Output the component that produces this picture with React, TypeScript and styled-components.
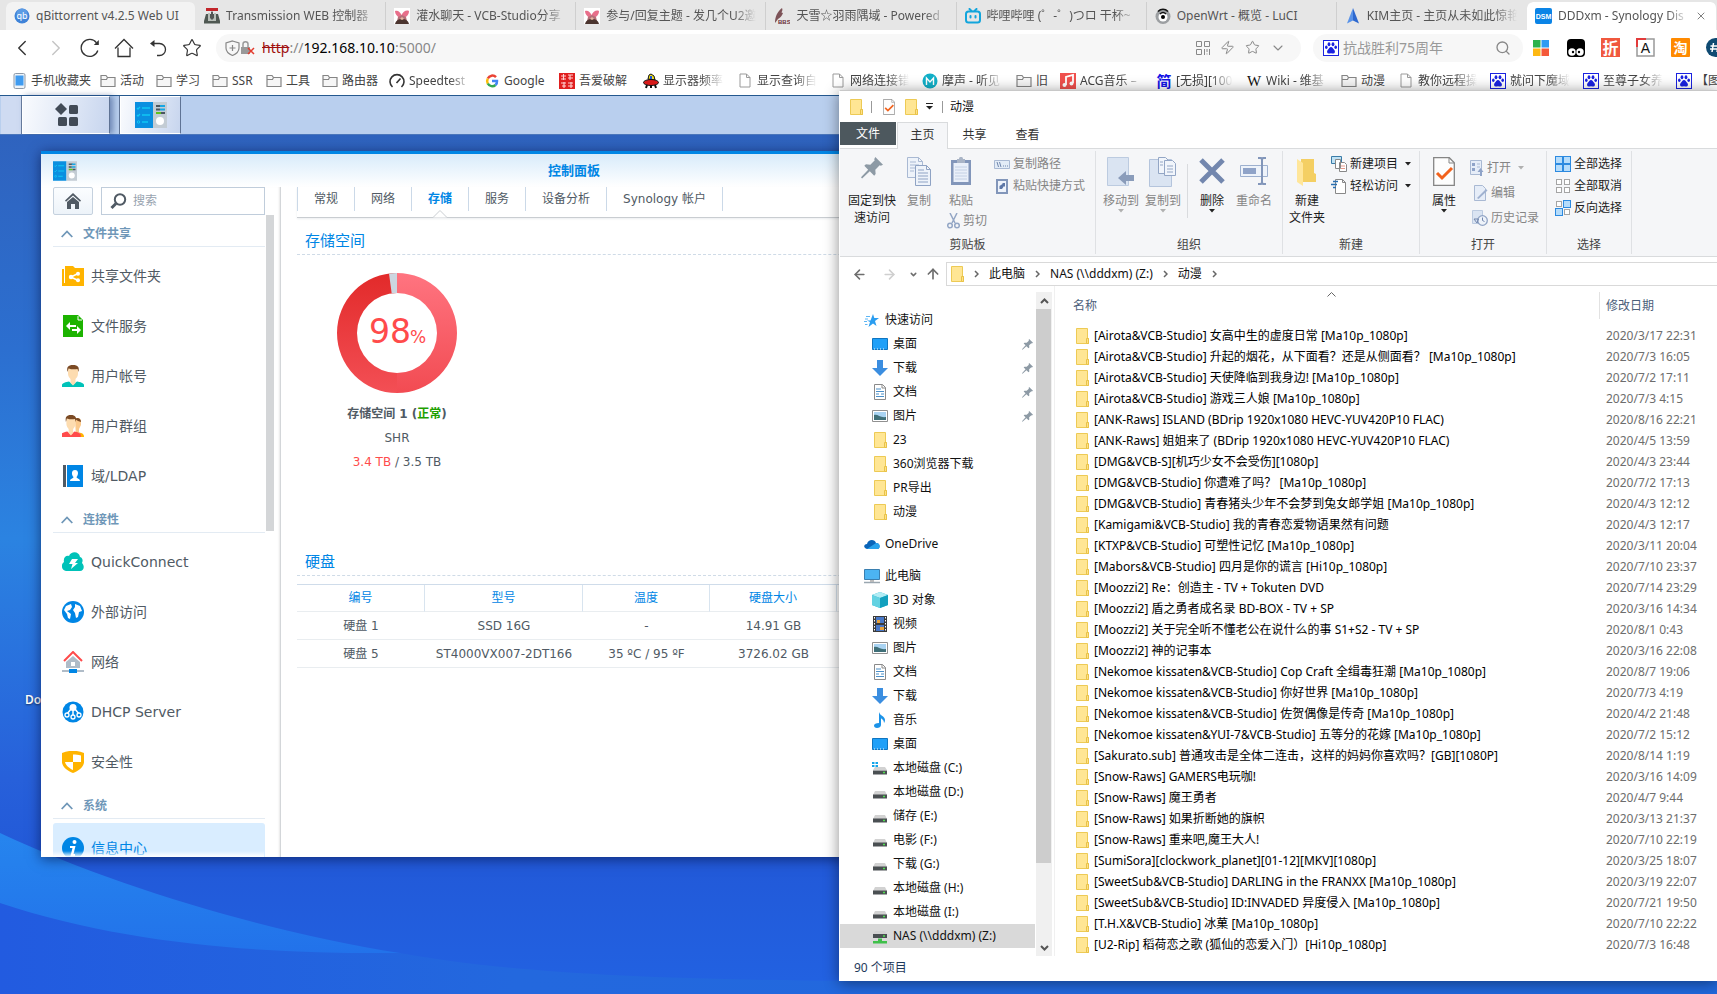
import React from 'react';
import styled, { createGlobalStyle, css } from 'styled-components';
import { Star, Search, ChevronLeft, ChevronRight, ChevronDown, Zap, X, ArrowLeft, ArrowRight, ArrowUp } from 'lucide-react';

const uiFont = `'Noto Sans', 'Noto Sans CJK SC', sans-serif`;
const dsmFont = `'DejaVu Sans', 'Noto Sans CJK SC', sans-serif`;

const GlobalStyle = createGlobalStyle`
  * { box-sizing: border-box; }
  body { margin: 0; background: #2260e0; }
  button, input, a { font: inherit; color: inherit; }
  button { border: 0; padding: 0; background: none; cursor: pointer; }
  a { text-decoration: none; }
  svg { display: block; flex: none; }
  ul { margin: 0; padding: 0; list-style: none; }
`;

const Screen = styled.div`
  position: relative;
  min-height: 100vh;
  display: flex;
  flex-direction: column;
  overflow: hidden;
  font: 12px/18px ${uiFont};
  color: #444;
`;

/* ---------- browser chrome ---------- */

const TabStrip = styled.nav`
  display: flex;
  align-items: flex-end;
  height: 30px;
  padding-left: 6px;
  background: #e6e6e6;
`;

const BrowserTab = styled.button<{ $look?: 'hover' | 'active'; $line?: boolean }>`
  flex: 1;
  min-width: 0;
  height: 28px;
  display: flex;
  align-items: center;
  gap: 6px;
  padding: 0 9px 0 8px;
  text-align: left;
  color: #555;
  border-right: 1px solid ${p => (p.$line ? '#cfcfcf' : 'transparent')};
  background-clip: padding-box;
  ${p => p.$look && css`
    border-radius: 6px 6px 0 0;
    background-color: ${p.$look === 'active' ? '#fff' : '#f3f3f3'};
  `}
`;

const fade = css`
  mask-image: linear-gradient(to right, #000 calc(100% - 22px), transparent);
`;

const TabTitle = styled.span<{ $fade?: boolean }>`
  flex: 1;
  overflow: hidden;
  white-space: nowrap;
  ${p => p.$fade && fade}
`;

const Toolbar = styled.div`
  display: flex;
  align-items: center;
  height: 36px;
  padding-bottom: 1px;
  background: #fff;
`;

const ToolButtons = styled.div`
  display: flex;
  width: 216px;
  padding-left: 5px;
`;

const ToolButton = styled.button<{ $off?: boolean }>`
  width: 34px;
  height: 28px;
  display: grid;
  place-items: center;
  color: ${p => (p.$off ? '#c4c4c4' : '#333')};
`;

const Pill = styled.div`
  height: 28px;
  display: flex;
  align-items: center;
  border-radius: 14px;
  background: #f7f7f7;
`;

const AddressPill = styled(Pill)`
  flex: 1;
  padding: 0 11px 0 9px;
`;

const Url = styled.div`
  flex: 1;
  padding-left: 7px;
  font-size: 14px;
  color: #888;
  s { color: #a01010; }
  b { font-weight: 400; color: #000; }
`;

const PillIcon = styled.button`
  width: 25px;
  display: grid;
  place-items: center;
  color: #888;
`;

const SearchPill = styled(Pill)`
  width: 210px;
  margin-left: 12px;
  padding: 0 8px 0 10px;
  gap: 4px;
  input {
    flex: 1;
    min-width: 0;
    border: 0;
    padding: 0;
    outline: 0;
    background: none;
    font-size: 14px;
  }
  input::placeholder { color: #999; }
`;

const Extensions = styled.div`
  display: flex;
  width: 194px;
  overflow: hidden;
`;

const Extension = styled.button`
  flex: none;
  width: 35px;
  display: grid;
  place-items: center;
`;

const Bookmarks = styled.nav`
  display: flex;
  height: 29px;
  padding-left: 11px;
  overflow: hidden;
  background: #fff;
`;

const Bookmark = styled.a<{ $w: number }>`
  flex: none;
  width: ${p => p.$w}px;
  display: flex;
  align-items: center;
  gap: 4px;
  span {
    flex: 1;
    overflow: hidden;
    white-space: nowrap;
  }
`;

const BookmarkText = styled.span<{ $fade?: boolean }>`
  margin-right: ${p => (p.$fade ? 13 : 0)}px;
  ${p => p.$fade && fade}
`;

/* ---------- DSM desktop ---------- */

const DsmBar = styled.div`
  display: flex;
  height: 40px;
  border-top: 1px solid #24588f;
  border-bottom: 1px solid #4a76bb;
  background: #b9cfee;
`;

const DsmBarEdge = styled.div`
  width: 21px;
  margin-left: 1px;
  background: #cfdbf2;
  border-right: 1px solid #6c7f9f;
`;

const DsmBarButton = styled.button<{ $w: number; $raised?: boolean }>`
  width: ${p => p.$w}px;
  display: grid;
  place-items: center;
  border: 1px solid #fff;
  border-right-color: #5f7394;
  background: linear-gradient(100deg, #f7f9fd 5%, #dce5f5 60%, #c7d5ee);
  box-shadow: ${p => (p.$raised ? '3px 0 6px rgba(30, 60, 120, 0.5)' : '-1px 0 #5f7394')};
  margin-right: 10px;
`;

const Desktop = styled.main`
  position: relative;
  flex: 1;
  overflow: hidden;
  font-family: ${dsmFont};
  background: linear-gradient(#2f63be, #2c6fd0 25%, #2b83e1 47%, #2760da 75%, #2259d8 84%, #2262e2);
`;

const Wallpaper = styled.svg`
  position: absolute;
  left: 0;
  bottom: 0;
  width: 100%;
  height: 200px;
`;

const DesktopLabel = styled.span`
  position: absolute;
  left: 25px;
  bottom: 285px;
  color: #fff;
  font: 12px/18px 'Noto Sans', sans-serif;
  font-weight: 600;
  text-shadow: 0 1px 2px rgba(0, 0, 0, 0.5);
`;

const DsmWindow = styled.section`
  position: absolute;
  left: 41px;
  top: 16px;
  bottom: 137px;
  width: 1066px;
  display: flex;
  flex-direction: column;
  background: #fff;
  border-top: 3px solid #0086e5;
  box-shadow: 0 2px 12px rgba(0, 10, 50, 0.6);
  color: #505a64;
`;

const DsmTitle = styled.header`
  flex: none;
  display: flex;
  align-items: center;
  height: 33px;
  padding: 0 36px 0 12px;
  background: linear-gradient(#d8ebfa, #fff);
  h1 {
    flex: 1;
    margin: 0;
    text-align: center;
    font-size: 13px;
    line-height: 18px;
    color: #0086e5;
  }
`;

const DsmBody = styled.div`
  flex: 1;
  min-height: 0;
  display: flex;
`;

const Sidebar = styled.aside`
  width: 240px;
  display: flex;
  flex-direction: column;
  padding-left: 12px;
  border-right: 1px solid #d3d6d9;
  box-shadow: inset -2px 0 2px -1px #e8e8e8;
`;

const SidebarTop = styled.div`
  display: flex;
  gap: 8px;
  width: 212px;
`;

const HomeButton = styled.button`
  flex: none;
  width: 40px;
  height: 28px;
  display: grid;
  place-items: center;
  border: 1px solid #c5d1de;
  border-radius: 2px;
  background: linear-gradient(#fbfdff, #edf3f9);
`;

const SearchBox = styled.label`
  flex: 1;
  min-width: 0;
  height: 28px;
  display: flex;
  align-items: center;
  gap: 6px;
  padding-left: 8px;
  border: 1px solid #c0cddb;
  input {
    flex: 1;
    min-width: 0;
    border: 0;
    padding: 0;
    outline: 0;
  }
  input::placeholder { color: #98a3af; opacity: 1; }
`;

const SidebarScroll = styled.div`
  position: relative;
  flex: 1;
  min-height: 0;
  display: flex;
  gap: 1px;
  overflow: hidden;
  &::after {
    content: '';
    position: absolute;
    left: 0;
    right: 16px;
    bottom: 0;
    height: 6px;
    background: linear-gradient(transparent, #fff);
  }
`;

const SidebarList = styled.div`
  width: 212px;
`;

const DsmThumb = styled.div`
  width: 8px;
  height: 316px;
  background: #d4d6d8;
`;

const SideHead = styled.button`
  width: 100%;
  height: 32px;
  display: flex;
  align-items: center;
  gap: 10px;
  padding: 6px 0 0 8px;
  border-bottom: 1px solid #e3ebf3;
  margin-bottom: 4px;
  font-weight: 700;
  color: #6f97b8;
`;

const SideItem = styled.a<{ $on?: boolean }>`
  height: 50px;
  display: flex;
  align-items: center;
  gap: 7px;
  padding-left: 9px;
  font-size: 14px;
  border-radius: 3px;
  ${p => p.$on && css`background: #d9edff; color: #0086e5;`}
`;

const Content = styled.div`
  flex: 1;
  min-width: 0;
  padding-left: 16px;
`;

const DsmTabs = styled.div`
  display: flex;
  height: 31px;
  border-bottom: 1px solid #c9cdd1;
  box-shadow: 0 1px 2px #eceef0;
`;

const DsmTab = styled.button<{ $on?: boolean }>`
  position: relative;
  height: 24px;
  padding: 0 16px;
  border-left: 1px solid #cbd9e8;
  &:last-child { border-right: 1px solid #cbd9e8; }
  ${p => p.$on && css`color: #0086e5; font-weight: 700;`}
  svg {
    position: absolute;
    left: 50%;
    margin-left: -7px;
    bottom: -7px;
  }
`;

const SectionTitle = styled.h2`
  margin: 0;
  padding: 12px 8px 2px;
  border-bottom: 1px dashed #cfdbe7;
  font-size: 15px;
  font-weight: 400;
  line-height: 22px;
  color: #0086e5;
`;

const Volume = styled.div`
  width: 200px;
  padding: 18px 0 65px;
  display: flex;
  flex-direction: column;
  align-items: center;
  line-height: 24px;
  svg { margin-bottom: 9px; }
  em { font-style: normal; color: #ff4b4b; }
  i { font-style: normal; color: #1ea000; }
`;

const DiskTable = styled.table`
  width: 100%;
  margin-top: 8px;
  table-layout: fixed;
  border-spacing: 0;
  border-top: 1px solid #cfdcea;
  th, td {
    height: 28px;
    padding: 0;
    text-align: center;
    font-weight: 400;
    border-bottom: 1px solid #e9edf0;
  }
  th {
    height: 27px;
    color: #0086e5;
    border-right: 1px solid #d8e4ef;
  }
`;

/* ---------- file explorer ---------- */

const Explorer = styled.section`
  position: absolute;
  left: 839px;
  right: 0;
  top: 90px;
  display: flex;
  flex-direction: column;
  border-top: 1px solid #c8c8c8;
  border-left: 1px solid #fff;
  background: #fff;
  box-shadow: 0 2px 14px rgba(0, 0, 0, 0.45);
  color: #111;
`;

const ExTitle = styled.header`
  height: 31px;
  display: flex;
  align-items: center;
  padding-left: 9px;
`;

const QuickTool = styled.button<{ $w: number }>`
  width: ${p => p.$w}px;
  display: grid;
  place-items: center;
`;

const Bar = styled.i`
  width: 1px;
  height: 12px;
  margin: 0 7px;
  background: #999;
`;

const ExTabs = styled.div`
  display: flex;
  height: 27px;
  border-bottom: 1px solid #d9dbdd;
`;

const ExTab = styled.button<{ $kind?: 'file' | 'on' }>`
  width: 53px;
  height: 24px;
  padding-top: 1px;
  color: #333;
  ${p => p.$kind === 'file' && css`
    width: 56px;
    height: 23px;
    margin-right: 1px;
    background: #4d585e;
    color: #fff;
  `}
  ${p => p.$kind === 'on' && css`
    width: 51px;
    height: 27px;
    padding-bottom: 3px;
    border: 1px solid #d9dbdd;
    border-bottom: 0;
    background: #f5f6f8;
  `}
`;

const Ribbon = styled.div`
  display: flex;
  height: 108px;
  padding: 2px 0;
  background: #f5f6f8;
  border-bottom: 1px solid #d9dbdd;
`;

const Group = styled.fieldset<{ $w: number }>`
  width: ${p => p.$w}px;
  min-width: 0;
  margin: 0;
  padding: 0;
  border: 0;
  border-right: 1px solid #dfe1e4;
  display: flex;
  flex-direction: column;
`;

const GroupBody = styled.div<{ $pad?: number }>`
  flex: 1;
  display: flex;
  align-items: flex-start;
  padding-left: ${p => p.$pad || 0}px;
`;

const GroupLabel = styled.span`
  height: 18px;
  text-align: center;
  color: #444;
`;

const BigButton = styled.button<{ $w: number; $off?: boolean }>`
  width: ${p => p.$w}px;
  flex: none;
  display: flex;
  flex-direction: column;
  align-items: center;
  padding-top: 6px;
  line-height: 17px;
  white-space: nowrap;
  color: ${p => (p.$off ? '#858585' : '#1c1c1c')};
  > span:first-child {
    height: 35px;
    display: flex;
    align-items: flex-start;
  }
`;

const Stack = styled.div<{ $pitch: number; $pad?: number; $left?: number }>`
  display: flex;
  flex-direction: column;
  padding: ${p => p.$pad || 0}px 0 0 ${p => p.$left || 0}px;
  > button { height: ${p => p.$pitch}px; }
`;

const SmallButton = styled.button<{ $off?: boolean }>`
  display: flex;
  align-items: center;
  gap: 3px;
  white-space: nowrap;
  color: ${p => (p.$off ? '#858585' : '#1c1c1c')};
  > svg:last-child { margin-left: 4px; }
`;

const Column = styled.div<{ $w: number }>`
  width: ${p => p.$w}px;
  flex: none;
`;

const RibbonLine = styled.i`
  width: 1px;
  height: 54px;
  margin: 13px 3px 0;
  background: #d9dbde;
`;

const AddressRow = styled.div`
  display: flex;
  height: 29px;
  padding-top: 5px;
  color: #777;
`;

const NavButtons = styled.div`
  display: flex;
  align-items: center;
  width: 106px;
  padding-left: 4px;
`;

const NavButton = styled.button<{ $w: number; $off?: boolean }>`
  width: ${p => p.$w}px;
  display: grid;
  place-items: center;
  color: ${p => (p.$off ? '#cfcfcf' : '#6e6e6e')};
`;

const Crumbs = styled.div`
  flex: 1;
  height: 24px;
  display: flex;
  align-items: center;
  gap: 10px;
  padding-left: 4px;
  border: 1px solid #d9d9d9;
  border-right: 0;
  button { color: #111; }
`;

const ExMain = styled.div`
  display: flex;
`;

const Tree = styled.nav`
  width: 196px;
  margin-top: 6px;
  padding: 16px 1px 8px 0;
`;

const TreeItem = styled.a<{ $top?: boolean; $on?: boolean; $gap?: boolean }>`
  height: 24px;
  display: flex;
  align-items: center;
  gap: 5px;
  margin-top: ${p => (p.$gap ? 8 : 0)}px;
  padding: 0 2px 0 ${p => (p.$top ? 24 : 32)}px;
  background: ${p => (p.$on ? '#d9d9d9' : 'none')};
  span { flex: 1; white-space: nowrap; }
`;

const ScrollBar = styled.div`
  width: 16px;
  margin-top: 6px;
  display: flex;
  flex-direction: column;
  background: #f0f0f0;
  color: #555;
`;

const ScrollArrow = styled.button`
  height: 17px;
  display: grid;
  place-items: center;
`;

const ScrollTrack = styled.div`
  flex: 1;
  &::before {
    content: '';
    display: block;
    height: 88%;
    margin-right: 1px;
    background: #cdcdcd;
  }
`;

const Files = styled.div`
  flex: 1;
  min-width: 0;
  margin-left: 2px;
  border-left: 1px solid #f0f0f0;
`;

const FileTable = styled.table`
  width: 100%;
  table-layout: fixed;
  border-spacing: 0;
  td, th { padding: 0; white-space: nowrap; overflow: hidden; }
  td { height: 21px; color: #000; }
  td:last-child { padding-left: 7px; color: #6d6d6d; }
  th {
    position: relative;
    height: 39px;
    text-align: left;
    font-weight: 400;
    color: #4c607a;
  }
  th:first-child { padding-left: 18px; }
  th > svg {
    position: absolute;
    top: 6px;
    left: 50%;
  }
`;

const DateHead = styled.span`
  display: block;
  padding: 5px 0 4px 6px;
  border-left: 1px solid #e2e2e2;
`;

const FileName = styled.div`
  display: flex;
  align-items: center;
  gap: 5px;
  padding-left: 21px;
  line-height: 18px;
`;

const Status = styled.footer`
  height: 25px;
  padding: 3px 0 0 14px;
  color: #1e395b;
`;

/* ---------- icons ---------- */

const Folder = () => (
  <svg width="13" height="16" viewBox="0 0 13 16">
    <path d="M.5.5h11v10h1v5H.5z" fill="#ffe694" stroke="#edca55" />
    <path d="M10.500 10.500h2v5h-2z" fill="#ffe187" stroke="#e8c248" />
  </svg>
);

const Caret = ({ off }: { off?: boolean }) => (
  <svg width="6" height="4" viewBox="0 0 6 4"><path d="M0 0h6L3 3.5z" fill={off ? '#b0b0b0' : '#222'} /></svg>
);

const Crumb = () => (
  <svg width="5" height="8" viewBox="0 0 5 8"><path d="M1 1l3 3-3 3" fill="none" stroke="#666" strokeWidth="1.500" /></svg>
);

const Pin = ({ s = 11 }: { s?: number }) => (
  <svg width={s} height={s} viewBox="0 0 20 20">
    <path d="M13 0l7 7-2 1-1-.5-4 4 .3 4L12 17l-4-4-7 6.500-1-1L6.500 11.500 3 8l1.500-1.300 4 .3 4-4L12 2z" fill="#8d9aa5" />
  </svg>
);

const Paw = () => (
  <svg width="16" height="16" viewBox="0 0 16 16">
    <rect x=".5" y=".5" width="15" height="15" fill="#fff" stroke="#1a22e0" />
    <g fill="#1a22e0">
      <ellipse cx="6" cy="4.200" rx="1.400" ry="2" /><ellipse cx="10" cy="4.200" rx="1.400" ry="2" />
      <ellipse cx="3.300" cy="7.300" rx="1.300" ry="1.800" /><ellipse cx="12.700" cy="7.300" rx="1.300" ry="1.800" />
      <path d="M8 7c1.500 0 2 1.700 3.300 3 1.200 1.300.7 3.500-1 3.500-1 0-1.500-.3-2.300-.3s-1.300.3-2.300.3c-1.700 0-2.200-2.200-1-3.500C6 8.700 6.500 7 8 7z" />
    </g>
  </svg>
);

const GrayFolder = () => (
  <svg width="16" height="14" viewBox="0 0 16 14"><path d="M1 12.500v-11h5l1.500 2H15v9zM1 5.500h5.500l1-2" fill="#f6f6f6" stroke="#858585" strokeWidth="1.200" /></svg>
);

const GrayDoc = () => (
  <svg width="16" height="15" viewBox="0 0 16 15"><path d="M3 1h6.500L13 4.500V14H3zM9.500 1v3.500H13" fill="#fff" stroke="#9a9a9a" /></svg>
);

const Rabbit = () => (
  <svg width="16" height="16" viewBox="0 0 16 16">
    <rect width="16" height="16" fill="#fff" />
    <path d="M1 3c3-1 5 1 6.500 4C9 4 12 1.500 15 3c0 4-3 6-5 7H6C3 8.500 1 6 1 3z" fill="#e86f8a" />
    <path d="M4 9l4-2 4 2 1 4H3z" fill="#b5707a" /><path d="M1 16c1-4 4-5 7-5s6 1 7 5z" fill="#4b352f" /><path d="M6 11l2-2 2 2-2 1z" fill="#e8b9a2" />
  </svg>
);

const favicons: Record<string, React.ReactNode> = {
  qb: (
    <svg width="16" height="16" viewBox="0 0 16 16"><circle cx="8" cy="8" r="7.500" fill="#3f83d8" /><circle cx="8" cy="6" r="5.500" fill="#5c9be4" />
      <text x="8" y="11" fontSize="9" textAnchor="middle" fill="#fff" fontFamily="Noto Sans">qb</text></svg>
  ),
  tr: (
    <svg width="16" height="16" viewBox="0 0 16 16"><path d="M2 6h12l2 7v2.500H0V13z" fill="#4f5852" /><path d="M2 0h12v3H2z" fill="#c2252a" /><path d="M7 3h2v8H7z" fill="#aaa" />
      <path d="M4 5h2v5l2 2 2-2V5h2v8H4z" fill="#b9bfb9" /><path d="M7.300 4h1.400v7H7.300z" fill="#333" /></svg>
  ),
  rabbit: <Rabbit />,
  bbs: (
    <svg width="16" height="16" viewBox="0 0 16 16"><path d="M1 15C1 9 3 4 8 0c1 2 0 3-.5 4.500L9 5c-1 3-3 5-5 6z" fill="#7d5358" />
      <text x="4" y="16" fontSize="6" fontWeight="700" fill="#6b2f3a" fontFamily="Liberation Sans">BBS</text></svg>
  ),
  bili: (
    <svg width="16" height="16" viewBox="0 0 16 16" fill="none" stroke="#12a5dc" strokeWidth="2" strokeLinecap="round">
      <rect x="1" y="3.500" width="14" height="11" rx="2.500" /><path d="M4.500 1l2 2M11.500 1l-2 2M5.500 8v1.500M10.500 8v1.500" /></svg>
  ),
  owrt: (
    <svg width="16" height="16" viewBox="0 0 16 16"><circle cx="8" cy="8.500" r="7.500" fill="#9c9fa2" /><circle cx="8" cy="9" r="4.500" fill="#fff" />
      <circle cx="8" cy="9" r="2" /><path d="M3 3.500c3-3 7-3 10 0M5 6c2-2 4-2 6 0" fill="none" stroke="#111" strokeWidth="1.600" /></svg>
  ),
  kim: (
    <svg width="16" height="16" viewBox="0 0 16 16"><path d="M8 0L2 15.500l6-3z" fill="#5a93e8" /><path d="M8 0l6 15.500-6-3z" fill="#2d68cf" /></svg>
  ),
  dsm: (
    <svg width="17" height="16" viewBox="0 0 17 16"><rect width="17" height="16" rx="2" fill="#0b84e6" />
      <text x="8.500" y="10.500" fontSize="7" fontWeight="700" textAnchor="middle" fill="#fff" fontFamily="Liberation Sans">DSM</text></svg>
  ),
};

const browserTabs: { icon: string; title: string; look?: 'hover' | 'active'; line?: boolean; fade?: boolean }[] = [
  { icon: 'qb', title: 'qBittorrent v4.2.5 Web UI', look: 'hover' },
  { icon: 'tr', title: 'Transmission WEB 控制器', line: true, fade: true },
  { icon: 'rabbit', title: '灌水聊天 - VCB-Studio分享', line: true, fade: true },
  { icon: 'rabbit', title: '参与/回复主题 - 发几个U2邀', line: true, fade: true },
  { icon: 'bbs', title: '天雪☆羽雨隅域 - Powered', line: true, fade: true },
  { icon: 'bili', title: '哔哩哔哩 (゜-゜)つロ 干杯~', line: true, fade: true },
  { icon: 'owrt', title: 'OpenWrt - 概览 - LuCI', line: true },
  { icon: 'kim', title: 'KIM主页 - 主页从未如此惊艳', fade: true },
  { icon: 'dsm', title: 'DDDxm - Synology Dis', look: 'active', fade: true },
];

const bookmarks: [React.ReactNode, string, number, boolean?][] = [
  [<svg width="16" height="16" viewBox="0 0 16 16"><rect x="3" y=".5" width="11" height="15" rx="1.500" fill="#eef3f8" stroke="#8d99a8" /><rect x="4.500" y="2.500" width="8" height="10" fill="#3f9bf0" /></svg>, '手机收藏夹', 89],
  [<GrayFolder />, '活动', 56],
  [<GrayFolder />, '学习', 56],
  [<GrayFolder />, 'SSR', 54],
  [<GrayFolder />, '工具', 56],
  [<GrayFolder />, '路由器', 67],
  [<svg width="16" height="16" viewBox="0 0 16 16" fill="none" stroke="#333" strokeWidth="1.600"><path d="M3.500 14A7 7 0 1 1 12.500 14M7.500 10l4-4.500" /></svg>, 'Speedtest', 95, true],
  [<svg width="16" height="16" viewBox="0 0 16 16" fill="none" strokeWidth="2.500"><path d="M12 4.200A5 5 0 0 0 3.800 5.500" stroke="#ea4335" /><path d="M3.800 5.500a5 5 0 0 0 0 5" stroke="#fbbc05" /><path d="M3.800 10.500A5 5 0 0 0 11.500 12" stroke="#34a853" /><path d="M11.500 12A5 5 0 0 0 13 8H8" stroke="#4285f4" /></svg>, 'Google', 75],
  [<svg width="16" height="16" viewBox="0 0 16 16"><rect width="16" height="16" fill="#e01f1f" /><path d="M2 3h5M2 6h5M4.500 1v6M9 2h5M9 5h5M11 2v5M2 10h5M3 13h4M5 9v6M9 10h5M9 13h5M12 9v6" stroke="#ffd2d2" strokeWidth="1.100" /></svg>, '吾爱破解', 84],
  [<svg width="16" height="16" viewBox="0 0 16 16"><path d="M5 6l1-4 2-1 3 2 1 4z" fill="#f4e11a" stroke="#111" /><ellipse cx="8" cy="9.500" rx="7.500" ry="3" fill="#d61a1a" stroke="#111" /><path d="M4 12l-1 3M12 12l1 3M8 12v3" stroke="#111" strokeWidth="2" /><path d="M7 3h2v3H7z" fill="#1b54d8" /></svg>, '显示器频率', 94, true],
  [<GrayDoc />, '显示查询自', 93, true],
  [<GrayDoc />, '网络连接错', 92, true],
  [<svg width="16" height="16" viewBox="0 0 16 16"><circle cx="8" cy="8" r="7.500" fill="#12b0c8" /><path d="M4.500 12V5L8 9l3.500-4v7" fill="none" stroke="#fff" strokeWidth="1.400" /></svg>, '摩声 - 听见', 94, true],
  [<GrayFolder />, '旧', 44],
  [<svg width="16" height="16" viewBox="0 0 16 16"><rect width="16" height="16" fill="#f0504d" /><path d="M6 12V4l7-2v8" fill="none" stroke="#fff" strokeWidth="1.800" /><circle cx="4.500" cy="12" r="2" fill="#fff" /><circle cx="11.500" cy="10.500" r="2" fill="#fff" /></svg>, 'ACG音乐 –', 96, true],
  [<svg width="16" height="16" viewBox="0 0 16 16"><text x="8" y="13.500" fontSize="15" fontWeight="700" textAnchor="middle" fill="#1414e6" fontFamily="Noto Sans CJK SC">简</text></svg>, '[无损][100', 90, true],
  [<svg width="16" height="16" viewBox="0 0 16 16"><text x="8" y="13" fontSize="15" textAnchor="middle" fill="#111" fontFamily="Liberation Serif">W</text></svg>, 'Wiki - 维基', 95, true],
  [<GrayFolder />, '动漫', 57],
  [<GrayDoc />, '教你远程操', 92, true],
  [<Paw />, '就问下魔域', 93, true],
  [<Paw />, '至尊子女养', 93, true],
  [<Paw />, '【图', 60],
];

const ControlPanelIcon = ({ w, h }: { w: number; h: number }) => (
  <svg width={w} height={h} viewBox="0 0 32 26">
    <rect width="18" height="26" fill="#0a8fe0" /><rect x="18" width="14" height="26" fill="#c3ccd4" />
    <path d="M2 6l1 1 2-2M7 6h8M2 13l1 1 2-2M7 13h8M7 20h6" stroke="#10c8f4" fill="none" strokeWidth="1.300" /><circle cx="3.500" cy="20" r="1.200" fill="none" stroke="#10c8f4" />
    <path d="M21 4h5M21 7.500h4M26 11h4" stroke="#4b5660" strokeWidth="2" /><path d="M25 4h5M25 7.500h5" stroke="#19a6e4" strokeWidth="2" /><path d="M21 11h5" stroke="#5dc21c" strokeWidth="2" />
    <circle cx="25" cy="19" r="4" fill="#fff" />
  </svg>
);

const BigSvg = ({ children }: { children: React.ReactNode }) => <svg width="22" height="22" viewBox="0 0 22 22">{children}</svg>;

const Person = ({ shirt }: { shirt: string }) => (
  <g>
    <path d="M0 22v-2c0-2 4-3 7-3.500l4 3 4-3c3 .5 7 1.500 7 3.500v2z" fill={shirt} />
    <path d="M6 4c1-3 9-3 10 0v5c0 2-1.500 4-2.500 5v4L11 20.500 8.500 18v-4C7.500 13 6 11 6 9z" fill="#fddcb0" />
    <path d="M5.500 7C4.500 2 6 0 11 0s6.500 2 5.500 7l-1-3C13 4.500 9 4.500 6.500 3.500z" fill="#7b4a24" />
  </g>
);

const sideSections: { title: string; items: [React.ReactNode, string, boolean?][] }[] = [
  {
    title: '文件共享',
    items: [
      [<BigSvg><path d="M0 4h2v14h20v3H0zM3 1h8l2 2h9v18H3z" fill="#ffb400" /><path d="M2.500 4v14" stroke="#fff" /><path d="M9 12l7-3.500M9 12l7 3.500" stroke="#fff" strokeWidth="1.500" /><circle cx="9" cy="12" r="2.200" fill="#fff" /><circle cx="16" cy="8.700" r="2" fill="#fff" /><circle cx="16" cy="15.300" r="2" fill="#fff" /></BigSvg>, '共享文件夹'],
      [<BigSvg><path d="M1 0h15l5 5v17H1z" fill="#1cb300" /><path d="M16 1v4h4" fill="none" stroke="#fff" /><path d="M4 11l4-4v3h6v2H8v3zM19 15l-4-4v3h-5v2h5v3z" fill="#fff" /></BigSvg>, '文件服务'],
      [<BigSvg><Person shirt="#00c2b8" /></BigSvg>, '用户帐号'],
      [<BigSvg><path d="M13 4c2-2 6-1 6 2v4l-2 4v3l4 2 1 3h-8z" fill="#fbc98c" /><path d="M13 4c2-2 6-1 6 3l-3-1z" fill="#7b4a24" /><path d="M18 18c3 0 4 2 4 4h-4z" fill="#ffb400" /><g transform="translate(-1 0) scale(.9 1)"><Person shirt="#ff4b4b" /></g></BigSvg>, '用户群组'],
      [<BigSvg><path d="M1 0h3v22H1z" fill="#505a64" /><path d="M5 0h16v22H5z" fill="#0086e5" /><path d="M13 5c4 0 3.500 5 1.500 7 0 1.500 3.500 1.500 3.500 4H8c0-2.500 3.500-2.500 3.500-4C9.500 10 9 5 13 5z" fill="#fff" /></BigSvg>, '域/LDAP'],
    ],
  },
  {
    title: '连接性',
    items: [
      [<BigSvg><path d="M4 20a5 5 0 0 1-2-9C1 7 4 4 7 5c2-5 10-5 11 1 3 1 3 4 2 6 3 3 2 8-2 8z" fill="#00c2b8" /><path d="M10 8h6l-3 4h3l-7 6 1.500-5H7z" fill="#fff" /></BigSvg>, 'QuickConnect'],
      [<BigSvg><circle cx="11" cy="11" r="11" fill="#0086e5" /><path d="M4 5l5-2 1 3-2 3-3 1 4 3-1 5-2-1-1-4-3-4zM13 3l5 2 2 5-3 1-1 5-2 1-1-5-2-3 2-3z" fill="#fff" /></BigSvg>, '外部访问'],
      [<BigSvg><path d="M11 5l7 6v6H4v-6z" fill="#b0bcc8" /><path d="M9 11h4v4H9z" fill="#fff" /><path d="M2 10l9-9 9 9" fill="none" stroke="#ff4b4b" strokeWidth="2" /><path d="M0 20h22" stroke="#b0bcc8" strokeWidth="2" /><path d="M7 18h8v4H7z" fill="#0086e5" /></BigSvg>, '网络'],
      [<BigSvg><circle cx="11" cy="11" r="10.500" fill="#0086e5" /><circle cx="11" cy="6.500" r="3.500" fill="#fff" /><path d="M9 8l-4 5M11 9v5M13 8l4 5" stroke="#fff" strokeWidth="1.500" /><g fill="#0086e5" stroke="#fff" strokeWidth="1.300"><circle cx="5" cy="14" r="2" /><circle cx="11" cy="16" r="2" /><circle cx="17" cy="14" r="2" /></g></BigSvg>, 'DHCP Server'],
      [<BigSvg><path d="M0 2c7-3 15-3 22 0v9c0 5-6 9-11 11C6 20 0 16 0 11z" fill="#ffb400" /><path d="M11 3.500c3 0 5 0 8 1V11h-8zM11 11v8c-3-1.500-7-4-8-8z" fill="#fff" /></BigSvg>, '安全性'],
    ],
  },
  {
    title: '系统',
    items: [
      [<BigSvg><circle cx="11" cy="11" r="11" fill="#0086e5" /><circle cx="12.500" cy="5" r="2" fill="#fff" /><path d="M8 9h5.500L11.500 17H13v2H8.500l2-8H8z" fill="#fff" /></BigSvg>, '信息中心', true],
    ],
  },
];

const Small = ({ children }: { children: React.ReactNode }) => <svg width="16" height="16" viewBox="0 0 16 16">{children}</svg>;

const treeIcons: Record<string, React.ReactNode> = {
  star: <Small><path d="M9 2l1.300 4H15l-4 3 1.500 5L9 11.500 4.500 15l1.500-5-3-1.500h3.500z" fill="#2a9df0" /><path d="M2 4.500h4M1 7h3M0 9.500h3M1 12.500h2.500" stroke="#5db6f5" /></Small>,
  desktop: <Small><path d="M.5 2.500h15v11H.5z" fill="#1fa0f8" stroke="#0f75c0" /><path d="M2 13h12" stroke="#fff" strokeDasharray="1 2" /></Small>,
  down: <Small><path d="M5 0h6v8h5l-8 8-8-8h5z" fill="#3b8ee0" /></Small>,
  doc: <Small><path d="M2.500.5h8l3 3v12h-11z" fill="#fff" stroke="#8a8a8a" /><path d="M10 .5V4h3.500" fill="none" stroke="#8a8a8a" /><path d="M4 5h5M4 7.500h8M4 10h3M9 10h3M4 12.500h8" stroke="#4b8fc8" /></Small>,
  pic: <Small><path d="M.5 2.500h15v11H.5z" fill="#fff" stroke="#909090" /><path d="M2 4h12v8H2z" fill="#a9d3f2" /><path d="M2 7c4-1 6 3 12 2v3H2z" fill="#3f6f78" /></Small>,
  folder: <Small><g transform="translate(2 0)"><Folder /></g></Small>,
  cloud: <Small><path d="M3 13c-4-1-3.500-5 0-5 1-5 8-5 9-1 4-.5 5 5 1.500 6z" fill="#0a64b8" /><path d="M3 13l9-6c4-.5 5 5 1.500 6z" fill="#28a2ec" /></Small>,
  pc: <Small><path d="M.5 1.500h15v10H.5z" fill="#4cb4f2" stroke="#3a7fb0" /><path d="M0 14.500h16" stroke="#9aa7b0" strokeWidth="1.500" /><path d="M6 12h4v2H6z" fill="#bbb" /></Small>,
  cube: <Small><path d="M8 0l8 3v10l-8 3-8-3V3z" fill="#29b6d0" /><path d="M8 0l8 3-8 3-8-3z" fill="#b2ecf4" /><path d="M8 6l8-3v10l-8 3z" fill="#12a0be" /><path d="M0 3l8 3v10l-8-3z" fill="#63d2e2" /></Small>,
  film: <Small><path d="M1 0h14v16H1z" fill="#3a3a3a" /><path d="M4 1h8v6H4zM4 9h8v6H4z" fill="#4878c8" /><path d="M5 4h3v3H5zM8 11h4v3H8z" fill="#e8a23a" /><path d="M2.500 1v14M13.500 1v14" stroke="#fff" strokeDasharray="1.500 1.500" /></Small>,
  note: <Small><path d="M7 0c1 4 6 4 6 8 0 2-1 3-1 3 0-4-3-4-3-5v7c0 2-2 3-4 3s-3-1-3-2.500S4 11 7 11z" fill="#1c93e8" /></Small>,
  disk: <Small><path d="M3 7h10l2 4H1z" fill="#d2d2d2" /><path d="M1 10.500h14v4H1z" fill="#4a4f52" /><path d="M11 12.500h2" stroke="#4fe04f" strokeWidth="1.500" /></Small>,
  win: <Small><path d="M3 7h10l2 3H1z" fill="#d2d2d2" /><path d="M1 10.500h14v4H1z" fill="#4a4f52" /><path d="M11 12.500h2" stroke="#4fe04f" strokeWidth="1.500" /><path d="M0 2h2.500v2H0zM3.500 2H6v2H3.500zM0 5h2.500v2H0zM3.500 5H6v2H3.500z" fill="#12a4ea" /></Small>,
  net: <Small><path d="M3 3h10l2 3H1z" fill="#d2d2d2" /><path d="M1 6h14v4H1z" fill="#4a4f52" /><path d="M11 8h2" stroke="#4fe04f" strokeWidth="1.500" /><path d="M6 10.500h4V13h5v2.500H1V13h5z" fill="#3fc04a" /></Small>,
};

const tree: { icon: string; text: string; top?: boolean; gap?: boolean; pin?: boolean; on?: boolean }[] = [
  { icon: 'star', text: '快速访问', top: true },
  { icon: 'desktop', text: '桌面', pin: true },
  { icon: 'down', text: '下载', pin: true },
  { icon: 'doc', text: '文档', pin: true },
  { icon: 'pic', text: '图片', pin: true },
  { icon: 'folder', text: '23' },
  { icon: 'folder', text: '360浏览器下载' },
  { icon: 'folder', text: 'PR导出' },
  { icon: 'folder', text: '动漫' },
  { icon: 'cloud', text: 'OneDrive', top: true, gap: true },
  { icon: 'pc', text: '此电脑', top: true, gap: true },
  { icon: 'cube', text: '3D 对象' },
  { icon: 'film', text: '视频' },
  { icon: 'pic', text: '图片' },
  { icon: 'doc', text: '文档' },
  { icon: 'down', text: '下载' },
  { icon: 'note', text: '音乐' },
  { icon: 'desktop', text: '桌面' },
  { icon: 'win', text: '本地磁盘 (C:)' },
  { icon: 'disk', text: '本地磁盘 (D:)' },
  { icon: 'disk', text: '储存 (E:)' },
  { icon: 'disk', text: '电影 (F:)' },
  { icon: 'disk', text: '下载 (G:)' },
  { icon: 'disk', text: '本地磁盘 (H:)' },
  { icon: 'disk', text: '本地磁盘 (I:)' },
  { icon: 'net', text: 'NAS (\\\\dddxm) (Z:)', on: true },
];

const files: [string, string][] = [
  ['[Airota&VCB-Studio] 女高中生的虚度日常 [Ma10p_1080p]', '2020/3/17 22:31'],
  ['[Airota&VCB-Studio] 升起的烟花，从下面看？还是从侧面看？ [Ma10p_1080p]', '2020/7/3 16:05'],
  ['[Airota&VCB-Studio] 天使降临到我身边! [Ma10p_1080p]', '2020/7/2 17:11'],
  ['[Airota&VCB-Studio] 游戏三人娘 [Ma10p_1080p]', '2020/7/3 4:15'],
  ['[ANK-Raws] ISLAND (BDrip 1920x1080 HEVC-YUV420P10 FLAC)', '2020/8/16 22:21'],
  ['[ANK-Raws] 姐姐来了 (BDrip 1920x1080 HEVC-YUV420P10 FLAC)', '2020/4/5 13:59'],
  ['[DMG&VCB-S][机巧少女不会受伤][1080p]', '2020/4/3 23:44'],
  ['[DMG&VCB-Studio] 你遭难了吗？ [Ma10p_1080p]', '2020/7/2 17:13'],
  ['[DMG&VCB-Studio] 青春猪头少年不会梦到兔女郎学姐 [Ma10p_1080p]', '2020/4/3 12:12'],
  ['[Kamigami&VCB-Studio] 我的青春恋爱物语果然有问题', '2020/4/3 12:17'],
  ['[KTXP&VCB-Studio] 可塑性记忆 [Ma10p_1080p]', '2020/3/11 20:04'],
  ['[Mabors&VCB-Studio] 四月是你的谎言 [Hi10p_1080p]', '2020/7/10 23:37'],
  ['[Moozzi2] Re：创造主 - TV + Tokuten DVD', '2020/7/14 23:29'],
  ['[Moozzi2] 盾之勇者成名录 BD-BOX - TV + SP', '2020/3/16 14:34'],
  ['[Moozzi2] 关于完全听不懂老公在说什么的事 S1+S2 - TV + SP', '2020/8/1 0:43'],
  ['[Moozzi2] 神的记事本', '2020/3/16 22:08'],
  ['[Nekomoe kissaten&VCB-Studio] Cop Craft 全缉毒狂潮 [Ma10p_1080p]', '2020/8/7 19:06'],
  ['[Nekomoe kissaten&VCB-Studio] 你好世界 [Ma10p_1080p]', '2020/7/3 4:19'],
  ['[Nekomoe kissaten&VCB-Studio] 佐贺偶像是传奇 [Ma10p_1080p]', '2020/4/2 21:48'],
  ['[Nekomoe kissaten&YUI-7&VCB-Studio] 五等分的花嫁 [Ma10p_1080p]', '2020/7/2 15:12'],
  ['[Sakurato.sub] 普通攻击是全体二连击，这样的妈妈你喜欢吗？[GB][1080P]', '2020/8/14 1:19'],
  ['[Snow-Raws] GAMERS电玩咖!', '2020/3/16 14:09'],
  ['[Snow-Raws] 魔王勇者', '2020/4/7 9:44'],
  ['[Snow-Raws] 如果折断她的旗帜', '2020/3/13 21:37'],
  ['[Snow-Raws] 重来吧,魔王大人!', '2020/7/10 22:19'],
  ['[SumiSora][clockwork_planet][01-12][MKV][1080p]', '2020/3/25 18:07'],
  ['[SweetSub&VCB-Studio] DARLING in the FRANXX [Ma10p_1080p]', '2020/3/19 22:07'],
  ['[SweetSub&VCB-Studio] ID:INVADED 异度侵入 [Ma10p_1080p]', '2020/7/21 19:50'],
  ['[T.H.X&VCB-Studio] 冰菓 [Ma10p_1080p]', '2020/7/10 22:22'],
  ['[U2-Rip] 稻荷恋之歌 (狐仙的恋爱入门）[Hi10p_1080p]', '2020/7/3 16:48'],
];

/* ---------- ribbon icons ---------- */

const CopyIcon = () => (
  <svg width="26" height="29" viewBox="0 0 26 29" fill="#eef3fa" stroke="#a9b9d3">
    <path d="M1.500.5h11l4 4v16h-15zM12.500.5v4h4" /><path d="M4 5h6M4 8h9M4 11h9M4 14h4" />
    <path d="M9.500 8.500h11l4 4v16h-15zM20.500 8.500v4h4" stroke="#8fa3c4" /><path d="M12 13h6M12 16h10M12 19h10M12 22h10M12 25h10" stroke="#8fa3c4" />
  </svg>
);

const PasteIcon = () => (
  <svg width="22" height="29" viewBox="0 0 22 29"><path d="M1 3h20v25H1z" fill="#8296ba" /><path d="M3.500 6h15v19h-15z" fill="#e9eff9" /><path d="M7 2h2c0-3 4-3 4 0h2v4H7z" fill="#a9b4c6" /><path d="M5 10h12M5 13h12M5 16h12M5 19h12M5 22h12" stroke="#c3d0e4" /></svg>
);

const MoveIcon = () => (
  <svg width="28" height="30" viewBox="0 0 28 30"><path d="M.5.5h21v28H.5z" fill="#dae4f2" stroke="#bccbe0" /><path d="M11 21l8-7v4h8v6h-8v4z" fill="#8a9cba" /></svg>
);

const CopyToIcon = () => (
  <svg width="28" height="31" viewBox="0 0 28 31" stroke="#b4c4dc" fill="#dae4f2"><path d="M.5 2.500h22v27H.5z" /><g fill="#f1f5fb" stroke="#93a6c5"><path d="M9.500.5h7l3 3v13h-10z" /><path d="M15.500 3.500h8l3 3v12h-11z" /><path d="M18 9h6M18 12h6M18 15h6M11 5h3M11 8h3" /></g></svg>
);

const SelectGrid = ({ kind }: { kind: 'all' | 'none' | 'invert' }) => {
  const cells = [[0, 0], [8, 0], [0, 8], [8, 8]];
  return (
    <Small>
      {cells.map(([x, y], i) => {
        const on = kind === 'all' || (kind === 'invert' && (i === 1 || i === 2));
        return on
          ? <rect key={i} x={x + 0.5} y={y + 0.5} width="7" height="7" fill="#b5dcfb" stroke="#2c8ae0" />
          : <rect key={i} x={x + 1.5} y={y + 1.5} width="5" height="5" fill="#fff" stroke="#a5a5a5" />;
      })}
    </Small>
  );
};

const CheckDoc = ({ w, h }: { w: number; h: number }) => (
  <svg width={w} height={h} viewBox="0 0 22 29"><path d="M.7.700h15.600l5 5v22.600H.7z" fill="#fdfdfd" stroke="#858585" strokeWidth="1.300" /><path d="M16 .7V6h5" fill="none" stroke="#858585" /><path d="M4 16l5 5 10-10" fill="none" stroke="#f2621c" strokeWidth="3" /></svg>
);

function BrowserChrome() {
  return (
    <>
      <TabStrip>
        {browserTabs.map(t => (
          <BrowserTab key={t.title} $look={t.look} $line={t.line}>
            {favicons[t.icon]}
            <TabTitle $fade={t.fade}>{t.title}</TabTitle>
            {t.look === 'active' && <X size={12} strokeWidth={1.5} />}
          </BrowserTab>
        ))}
      </TabStrip>
      <Toolbar>
        <ToolButtons>
          <ToolButton aria-label="后退"><ChevronLeft size={26} strokeWidth={1.300} /></ToolButton>
          <ToolButton aria-label="前进" $off><ChevronRight size={26} strokeWidth={1.300} /></ToolButton>
          <ToolButton aria-label="刷新">
            <svg width="20" height="20" viewBox="0 0 20 20"><path d="M17.800 12.500A8.500 8.500 0 1 1 16.500 4.800" fill="none" stroke="#333" strokeWidth="1.300" /><path d="M18.800 2v5h-5z" fill="#333" /></svg>
          </ToolButton>
          <ToolButton aria-label="主页">
            <svg width="20" height="20" viewBox="0 0 20 20" fill="none" stroke="#333" strokeWidth="1.300"><path d="M1 10.500L10 1.500l9 9M4 9.500v9h12v-9" /></svg>
          </ToolButton>
          <ToolButton aria-label="撤销">
            <svg width="18" height="18" viewBox="0 0 18 18"><path d="M3 4.500h7.500a6 6 0 0 1 0 12H8" fill="none" stroke="#333" strokeWidth="1.300" /><path d="M1 4.500L5.500 1v7z" fill="#333" /></svg>
          </ToolButton>
          <ToolButton aria-label="收藏"><Star size={20} strokeWidth={1.400} strokeLinejoin="miter" /></ToolButton>
        </ToolButtons>
        <AddressPill>
          <svg width="15" height="16" viewBox="0 0 15 16" fill="none" stroke="#888" strokeWidth="1.200"><path d="M7.500 1L14 3v5c0 4-3 6-6.500 7.500C4 14 1 12 1 8V3zM7.500 5v6M4.500 8h6" /></svg>
          <svg width="15" height="16" viewBox="0 0 15 16"><path d="M1 7h9v7H1z" fill="#999" /><path d="M3 7V4c0-3 5-3 5 0v3" fill="none" stroke="#999" strokeWidth="1.500" /><path d="M8 8l6 6M14 8l-6 6" stroke="#e23b2e" strokeWidth="1.500" /></svg>
          <Url role="textbox" aria-label="地址栏"><s>http</s>://<b>192.168.10.10</b>:5000/</Url>
          <PillIcon aria-label="二维码">
            <svg width="14" height="14" viewBox="0 0 14 14" fill="none" stroke="#888"><path d="M.5.5h5v5h-5zM8.500.5h5v5h-5zM.5 8.500h5v5h-5zM8.500 8v6M11 8v3M13.500 8v6M11 12.500v1" /></svg>
          </PillIcon>
          <PillIcon aria-label="极速"><Zap size={15} strokeWidth={1.600} /></PillIcon>
          <PillIcon aria-label="收藏此页"><Star size={15} strokeWidth={1.600} /></PillIcon>
          <PillIcon aria-label="更多"><ChevronDown size={16} strokeWidth={1.600} /></PillIcon>
        </AddressPill>
        <SearchPill>
          <Paw />
          <input type="search" aria-label="网页搜索" placeholder="抗战胜利75周年" />
          <PillIcon aria-label="搜索"><Search size={16} strokeWidth={2} /></PillIcon>
        </SearchPill>
        <Extensions>
          <Extension aria-label="应用"><Small><path d="M0 0h7.500v7.500H0z" fill="#2bb24c" /><path d="M8.500 0H16v7.500H8.500z" fill="#2f9bf2" /><path d="M0 8.500h7.500V16H0z" fill="#fdb813" /><path d="M8.500 8.500H16V16H8.500z" fill="#f4593a" /></Small></Extension>
          <Extension aria-label="脚本"><svg width="18" height="18" viewBox="0 0 18 18"><rect width="18" height="18" rx="4" /><circle cx="5" cy="13" r="3.700" fill="#fff" /><circle cx="13" cy="13" r="3.700" fill="#fff" /><circle cx="6" cy="13" r="1.200" /><circle cx="12" cy="13" r="1.200" /></svg></Extension>
          <Extension aria-label="折扣"><svg width="19" height="19" viewBox="0 0 19 19"><rect width="19" height="19" fill="#f0583e" /><text x="9.500" y="15.500" fontSize="16" fontWeight="700" textAnchor="middle" fill="#fff" fontFamily="Noto Sans CJK SC">折</text></svg></Extension>
          <Extension aria-label="翻译"><svg width="19" height="19" viewBox="0 0 19 19"><rect x="1" y="1" width="17" height="17" fill="#fff" stroke="#999" strokeWidth="1.500" /><path d="M1 9V1h9" fill="none" stroke="#e23b3b" strokeWidth="2" /><text x="9.500" y="14.500" fontSize="14" textAnchor="middle" fill="#111" fontFamily="Liberation Sans">A</text></svg></Extension>
          <Extension aria-label="淘宝"><svg width="19" height="19" viewBox="0 0 19 19"><rect width="19" height="19" rx="1" fill="#ff8a00" /><text x="9.500" y="14.500" fontSize="14" fontWeight="700" textAnchor="middle" fill="#fff" fontFamily="Noto Sans CJK SC">淘</text></svg></Extension>
          <Extension aria-label="标签"><svg width="19" height="19" viewBox="0 0 19 19"><circle cx="9.500" cy="9.500" r="9.500" fill="#0f4a72" /><path d="M7.500 5l-1.500 9M12.500 5L11 14M4.500 8h9M4 11h9" stroke="#fff" strokeWidth="1.500" /></svg></Extension>
        </Extensions>
      </Toolbar>
      <Bookmarks>
        {bookmarks.map(([icon, text, w, fades], i) => (
          <Bookmark key={i} href="#" $w={w}>{icon}<BookmarkText $fade={fades}>{text}</BookmarkText></Bookmark>
        ))}
      </Bookmarks>
    </>
  );
}

function UsageDonut() {
  return (
    <svg width="120" height="120" viewBox="0 0 120 120" role="img" aria-label="98%">
      <defs>
        <linearGradient id="right" x1="0" y1="0" x2="0" y2="1"><stop offset="0" stopColor="#ff7480" /><stop offset="1" stopColor="#f24b52" /></linearGradient>
        <linearGradient id="left" x1="0" y1="0" x2="0" y2="1"><stop offset="0" stopColor="#e22a2a" /><stop offset="1" stopColor="#f34f55" /></linearGradient>
      </defs>
      <path d="M60 0a60 60 0 0 1 0 120V100a40 40 0 0 0 0-80z" fill="url(#right)" />
      <path d="M60 120A60 60 0 0 1 60 0v20a40 40 0 0 0 0 80z" fill="url(#left)" />
      <path d="M60 0a60 60 0 0 0-8 .5l2.700 19.900a40 40 0 0 1 5.300-.4z" fill="#ccd6e0" />
      <text x="32" y="70" fontSize="33" fill="#ff4b4b" fontFamily="DejaVu Sans">98</text>
      <text x="73" y="70" fontSize="17" fill="#ff4b4b" fontFamily="DejaVu Sans">%</text>
    </svg>
  );
}

function ControlPanel() {
  const tabs = ['常规', '网络', '存储', '服务', '设备分析', 'Synology 帐户'];
  return (
    <DsmWindow>
      <DsmTitle>
        <ControlPanelIcon w={24} h={20} />
        <h1>控制面板</h1>
      </DsmTitle>
      <DsmBody>
        <Sidebar>
          <SidebarTop>
            <HomeButton aria-label="控制面板首页">
              <svg width="16" height="16" viewBox="0 0 16 16" fill="#505a64"><path d="M8 0l8 7.500-1 1.200L8 2.500 1 8.700 0 7.500z" /><path d="M8 4l6 5v7h-4v-5H6v5H2V9z" /></svg>
            </HomeButton>
            <SearchBox>
              <svg width="17" height="17" viewBox="0 0 17 17" fill="none" stroke="#505a64"><circle cx="10" cy="6.500" r="5.200" strokeWidth="2" /><path d="M6 10.500L1.500 15" strokeWidth="3" /></svg>
              <input type="search" placeholder="搜索" aria-label="搜索设置" />
            </SearchBox>
          </SidebarTop>
          <SidebarScroll>
            <SidebarList>
              {sideSections.map(s => (
                <div key={s.title}>
                  <SideHead>
                    <svg width="12" height="8" viewBox="0 0 12 8"><path d="M.700 7L6 1.500 11.300 7" fill="none" stroke="#6f97b8" strokeWidth="1.800" /></svg>
                    {s.title}
                  </SideHead>
                  {s.items.map(([icon, text, on]) => (
                    <SideItem key={text} href="#" $on={on}>{icon}{text}</SideItem>
                  ))}
                </div>
              ))}
            </SidebarList>
            <DsmThumb />
          </SidebarScroll>
        </Sidebar>
        <Content>
          <DsmTabs>
            {tabs.map(t => (
              <DsmTab key={t} $on={t === '存储'}>
                {t}
                {t === '存储' && <svg width="14" height="8" viewBox="0 0 14 8"><path d="M0 7.500L7 .5l7 7" fill="#fff" stroke="#c9cdd1" /></svg>}
              </DsmTab>
            ))}
          </DsmTabs>
          <SectionTitle>存储空间</SectionTitle>
          <Volume>
            <UsageDonut />
            <b>存储空间 1 (<i>正常</i>)</b>
            <span>SHR</span>
            <span><em>3.4 TB</em> / 3.5 TB</span>
          </Volume>
          <SectionTitle>硬盘</SectionTitle>
          <DiskTable>
            <colgroup><col width="128" /><col width="158" /><col width="127" /><col width="127" /><col /></colgroup>
            <thead><tr><th>编号</th><th>型号</th><th>温度</th><th>硬盘大小</th><th /></tr></thead>
            <tbody>
              <tr><td>硬盘 1</td><td>SSD 16G</td><td>-</td><td>14.91 GB</td><td /></tr>
              <tr><td>硬盘 5</td><td>ST4000VX007-2DT166</td><td>35 ºC / 95 ºF</td><td>3726.02 GB</td><td /></tr>
            </tbody>
          </DiskTable>
        </Content>
      </DsmBody>
    </DsmWindow>
  );
}

function ExplorerRibbon() {
  return (
    <Ribbon>
      <Group $w={256}>
        <GroupBody $pad={5}>
          <BigButton $w={54}><span><Pin s={22} /></span><span>固定到快</span><span>速访问</span></BigButton>
          <BigButton $w={40} $off><span><CopyIcon /></span><span>复制</span></BigButton>
          <Column $w={51}>
            <BigButton $w={44} $off><span><PasteIcon /></span><span>粘贴</span></BigButton>
            <Stack $pitch={24} $left={4}>
              <SmallButton $off>
                <svg width="13" height="16" viewBox="0 0 13 16" fill="none" stroke="#93a6c5" strokeWidth="1.500"><path d="M3 0l5 10M10 0L5 10" /><circle cx="3" cy="12.500" r="2.300" /><circle cx="10" cy="12.500" r="2.300" /></svg>
                剪切
              </SmallButton>
            </Stack>
          </Column>
          <Stack $pitch={22} $pad={2}>
            <SmallButton $off>
              <Small><path d="M.5 4.500h15v8H.5z" fill="#e3ecf7" stroke="#a9b9d3" /><path d="M3 6l1.500 5M5.500 6L7 11M9 10h1M11 10h1M13 10h1" stroke="#6f86ad" /></Small>
              复制路径
            </SmallButton>
            <SmallButton $off>
              <Small><path d="M2 1h12v15H2z" fill="#8296ba" /><path d="M4 3h8v11H4z" fill="#eef3fb" /><path d="M5.500 11V8l3-2V5H11v4l-1-1-2 3z" fill="#5c76a6" /></Small>
              粘贴快捷方式
            </SmallButton>
          </Stack>
        </GroupBody>
        <GroupLabel>剪贴板</GroupLabel>
      </Group>
      <Group $w={187}>
        <GroupBody $pad={4}>
          <BigButton $w={42} $off><span><MoveIcon /></span><span>移动到</span><Caret off /></BigButton>
          <BigButton $w={42} $off><span><CopyToIcon /></span><span>复制到</span><Caret off /></BigButton>
          <RibbonLine />
          <BigButton $w={42}><span><svg width="26" height="28" viewBox="0 0 26 28"><path d="M2 3l22 22M24 3L2 25" stroke="#7387ae" strokeWidth="5" /></svg></span><span>删除</span><Caret /></BigButton>
          <BigButton $w={42} $off><span><svg width="28" height="28" viewBox="0 0 28 28"><path d="M.5 8.500h27v11H.5z" fill="#eef3fa" stroke="#9db0cf" /><path d="M3 11h13v6H3z" fill="#8fa3c8" /><path d="M18 1h3l1 1.500L23 1h3M22 2v24M18 27h3l1-1.500 1 1.500h3" fill="none" stroke="#8296ba" strokeWidth="2" /></svg></span><span>重命名</span></BigButton>
        </GroupBody>
        <GroupLabel>组织</GroupLabel>
      </Group>
      <Group $w={137}>
        <GroupBody>
          <BigButton $w={48}><span><svg width="20" height="29" viewBox="0 0 20 29"><path d="M4 2h13v14l2 1v8H4z" fill="#f4cf63" /><path d="M0 2l6 4v23l-6-4z" fill="#ffe69a" /></svg></span><span>新建</span><span>文件夹</span></BigButton>
          <Stack $pitch={22} $pad={2}>
            <SmallButton><Small><path d="M.5.500h10v7H.5z" fill="#bfe2f5" stroke="#3a7ca8" /><path d="M4.500 3.500h5v9h-5zM8.500 6.500h5l2 2v7h-7z" fill="#fff" stroke="#888" /><path d="M10 10h4M10 12.500h4" stroke="#e89a8a" /></Small>新建项目<Caret /></SmallButton>
            <SmallButton><Small><path d="M4.500 1.500h7l3 3v11h-10zM11.500 1.500v3h3" fill="#fff" stroke="#888" /><path d="M2 3.500h5M0 6.500h6M2 9.500h3" stroke="#2a6fb0" strokeWidth="1.300" /></Small>轻松访问<Caret /></SmallButton>
          </Stack>
        </GroupBody>
        <GroupLabel>新建</GroupLabel>
      </Group>
      <Group $w={127}>
        <GroupBody $pad={3}>
          <BigButton $w={42}><span><CheckDoc w={22} h={29} /></span><span>属性</span><Caret /></BigButton>
          <Stack $pitch={25} $pad={4} $left={3}>
            <SmallButton $off><Small><path d="M2.500.5h11v14h-11z" fill="#e6edf8" stroke="#a9b9d3" /><path d="M4 3h3v3H4zM4 8h3v3H4z" fill="#8fa3c8" /><path d="M9 4h3M9 7h3" stroke="#a9b9d3" /><path d="M12 16V12H9.500L12.500 8l3 4H14v4z" fill="#8fa3c8" /></Small>打开<Caret off /></SmallButton>
            <SmallButton $off><Small><path d="M2.500.5h8l3 3v12h-11z" fill="#e6edf8" stroke="#a9b9d3" /><path d="M5 13l9-9 1.500 1.500-9 8.500z" fill="#9fb1d0" /></Small>编辑</SmallButton>
            <SmallButton $off><Small><path d="M.5.500h10v13H.5z" fill="#dae4f2" stroke="#bccbe0" /><circle cx="10.500" cy="10.500" r="4.800" fill="#eef3fa" stroke="#8fa3c4" strokeWidth="1.300" /><path d="M10.500 7.500v3l2 1M2 9l3 4 1.500-4z" fill="none" stroke="#7387ae" /></Small>历史记录</SmallButton>
          </Stack>
        </GroupBody>
        <GroupLabel>打开</GroupLabel>
      </Group>
      <Group $w={85}>
        <GroupBody $pad={4}>
          <Stack $pitch={22} $pad={2}>
            <SmallButton><SelectGrid kind="all" />全部选择</SmallButton>
            <SmallButton><SelectGrid kind="none" />全部取消</SmallButton>
            <SmallButton><SelectGrid kind="invert" />反向选择</SmallButton>
          </Stack>
        </GroupBody>
        <GroupLabel>选择</GroupLabel>
      </Group>
    </Ribbon>
  );
}

function FileExplorer() {
  return (
    <Explorer>
      <ExTitle>
        <QuickTool $w={15} aria-label="窗口"><Folder /></QuickTool>
        <Bar />
        <QuickTool $w={20} aria-label="属性"><CheckDoc w={12} h={16} /></QuickTool>
        <QuickTool $w={24} aria-label="新建文件夹"><Folder /></QuickTool>
        <QuickTool $w={12} aria-label="自定义快速访问工具栏">
          <svg width="7" height="7" viewBox="0 0 7 7"><path d="M0 .5h7" stroke="#222" /><path d="M0 3h7L3.500 6.500z" fill="#222" /></svg>
        </QuickTool>
        <Bar />
        动漫
      </ExTitle>
      <ExTabs>
        <ExTab $kind="file">文件</ExTab>
        <ExTab $kind="on">主页</ExTab>
        <ExTab>共享</ExTab>
        <ExTab>查看</ExTab>
      </ExTabs>
      <ExplorerRibbon />
      <AddressRow>
        <NavButtons>
          <NavButton $w={30} aria-label="返回"><ArrowLeft size={15} strokeWidth={2.500} /></NavButton>
          <NavButton $w={30} $off aria-label="前进"><ArrowRight size={15} strokeWidth={2.500} /></NavButton>
          <NavButton $w={18} aria-label="最近位置"><ChevronDown size={9} strokeWidth={4} /></NavButton>
          <NavButton $w={22} aria-label="上移"><ArrowUp size={16} strokeWidth={2.500} /></NavButton>
        </NavButtons>
        <Crumbs>
          <Folder />
          <Crumb /><button>此电脑</button>
          <Crumb /><button>{'NAS (\\\\dddxm) (Z:)'}</button>
          <Crumb /><button>动漫</button>
          <Crumb />
        </Crumbs>
      </AddressRow>
      <ExMain>
        <Tree>
          {tree.map((t, i) => (
            <TreeItem key={i} href="#" $top={t.top} $gap={t.gap} $on={t.on}>
              {treeIcons[t.icon]}
              <span>{t.text}</span>
              {t.pin && <Pin />}
            </TreeItem>
          ))}
        </Tree>
        <ScrollBar>
          <ScrollArrow aria-label="向上滚动"><svg width="9" height="6" viewBox="0 0 9 6"><path d="M1 5l3.500-3.500L8 5" fill="none" stroke="#555" strokeWidth="2" /></svg></ScrollArrow>
          <ScrollTrack />
          <ScrollArrow aria-label="向下滚动"><svg width="9" height="6" viewBox="0 0 9 6"><path d="M1 1l3.500 3.500L8 1" fill="none" stroke="#555" strokeWidth="2" /></svg></ScrollArrow>
        </ScrollBar>
        <Files>
          <FileTable>
            <colgroup><col /><col width="118" /></colgroup>
            <thead>
              <tr>
                <th>名称<svg width="9" height="5" viewBox="0 0 9 5"><path d="M.5 4.500l4-4 4 4" fill="none" stroke="#666" /></svg></th>
                <th><DateHead>修改日期</DateHead></th>
              </tr>
            </thead>
            <tbody>
              {files.map(([name, date]) => (
                <tr key={name}>
                  <td><FileName><Folder />{name}</FileName></td>
                  <td>{date}</td>
                </tr>
              ))}
            </tbody>
          </FileTable>
        </Files>
      </ExMain>
      <Status>90 个项目</Status>
    </Explorer>
  );
}

export default function App() {
  return (
    <Screen>
      <GlobalStyle />
      <BrowserChrome />
      <DsmBar>
        <DsmBarEdge />
        <DsmBarButton $w={88} $raised aria-label="主菜单">
          <svg width="23" height="24" viewBox="0 0 23 24" fill="#424b57"><path d="M6 0l6 6-6 6-6-6z" /><rect x="14" y="2" width="9" height="9" rx="1.500" /><rect x="3" y="14" width="9" height="9" rx="1.500" /><rect x="14" y="14" width="9" height="9" rx="1.500" /></svg>
        </DsmBarButton>
        <DsmBarButton $w={61} aria-label="控制面板"><ControlPanelIcon w={32} h={26} /></DsmBarButton>
      </DsmBar>
      <Desktop>
        <Wallpaper viewBox="0 0 1717 200" preserveAspectRatio="none">
          <defs>
            <linearGradient id="wave" x1="0" y1="0" x2="0" y2="1"><stop offset="0" stopColor="#2685ee" /><stop offset="1" stopColor="#2272ea" /></linearGradient>
            <linearGradient id="deep" x1="0" y1="0" x2="1" y2="0"><stop offset="0" stopColor="#225be0" /><stop offset=".3" stopColor="#2368de" /><stop offset="1" stopColor="#2068dc" /></linearGradient>
          </defs>
          <path d="M0 109C120 146 270 160 400 159C600 195 900 190 1717 180V200H0z" fill="url(#deep)" />
          <path d="M0 39C120 95 270 138 400 159C270 160 130 152 0 109z" fill="url(#wave)" />
        </Wallpaper>
        <DesktopLabel>Do</DesktopLabel>
        <ControlPanel />
      </Desktop>
      <FileExplorer />
    </Screen>
  );
}
